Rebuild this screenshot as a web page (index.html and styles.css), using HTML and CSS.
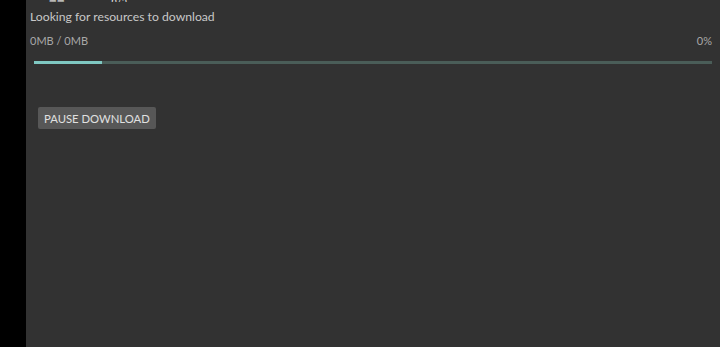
FILE: index.html
```html
<!DOCTYPE html>
<html lang="en">
<head>
    <meta charset="UTF-8">
    <meta name="viewport" content="width=device-width, initial-scale=1.0">
    <title>Download</title>
    <link rel="stylesheet" href="styles.css">
</head>
<body>
    <div class="side"></div>
    <div class="panel">
        <!-- Row cut off at top -->
        <div class="top-row">
            <span class="top-a">&#9638;&#9638;</span>
            <span class="top-b">n/a</span>
        </div>

        <p class="status">Looking for resources to download</p>

        <div class="size-row">
            <span>0MB / 0MB</span>
            <span>0%</span>
        </div>

        <div class="progress">
            <div class="progress-fill" style="width: 10%;"></div>
        </div>

        <button class="pause-btn">PAUSE DOWNLOAD</button>
    </div>
</body>
</html>
```

FILE: styles.css
```css
/* Body */
body {
    margin: 0;
    padding: 0;
    height: 347px;
    display: flex;
    background: #000;
    font-family: Lato, "Open Sans", sans-serif;
    overflow: hidden;
}

.side {
    width: 26px;
    flex-shrink: 0;
}

/* Panel */
.panel {
    flex: 1;
    background: #323232;
    padding: 0 8px 0 4px;
    display: flex;
    flex-direction: column;
}

.top-row {
    height: 6px;
    margin-top: -4px;
    display: flex;
    font-size: 11px;
    line-height: 10px;
    color: #ddd;
    overflow: hidden;
}

.top-a {
    margin-left: 19px;
    font-size: 8px;
}

.top-b {
    margin-left: 46px;
}

/* Status text */
.status {
    margin: 6px 0 0;
    font-size: 12.2px;
    line-height: 18px;
    color: #c8c8c8;
}

.size-row {
    margin-top: 8px;
    display: flex;
    justify-content: space-between;
    font-size: 11px;
    line-height: 14px;
    color: #a8a8a8;
}

/* Progress bar */
.progress {
    margin: 13px 0 0 4px;
    height: 3px;
    background: #4a5d58;
}

.progress-fill {
    height: 100%;
    background: #7fc8c2;
}

/* Button */
.pause-btn {
    align-self: flex-start;
    margin: 43px 0 0 8px;
    padding: 0 6px;
    height: 22px;
    border: none;
    border-radius: 2px;
    background: #575757;
    color: #e0e0e0;
    font-family: Lato, "Open Sans", sans-serif;
    font-size: 11.3px;
}
```
